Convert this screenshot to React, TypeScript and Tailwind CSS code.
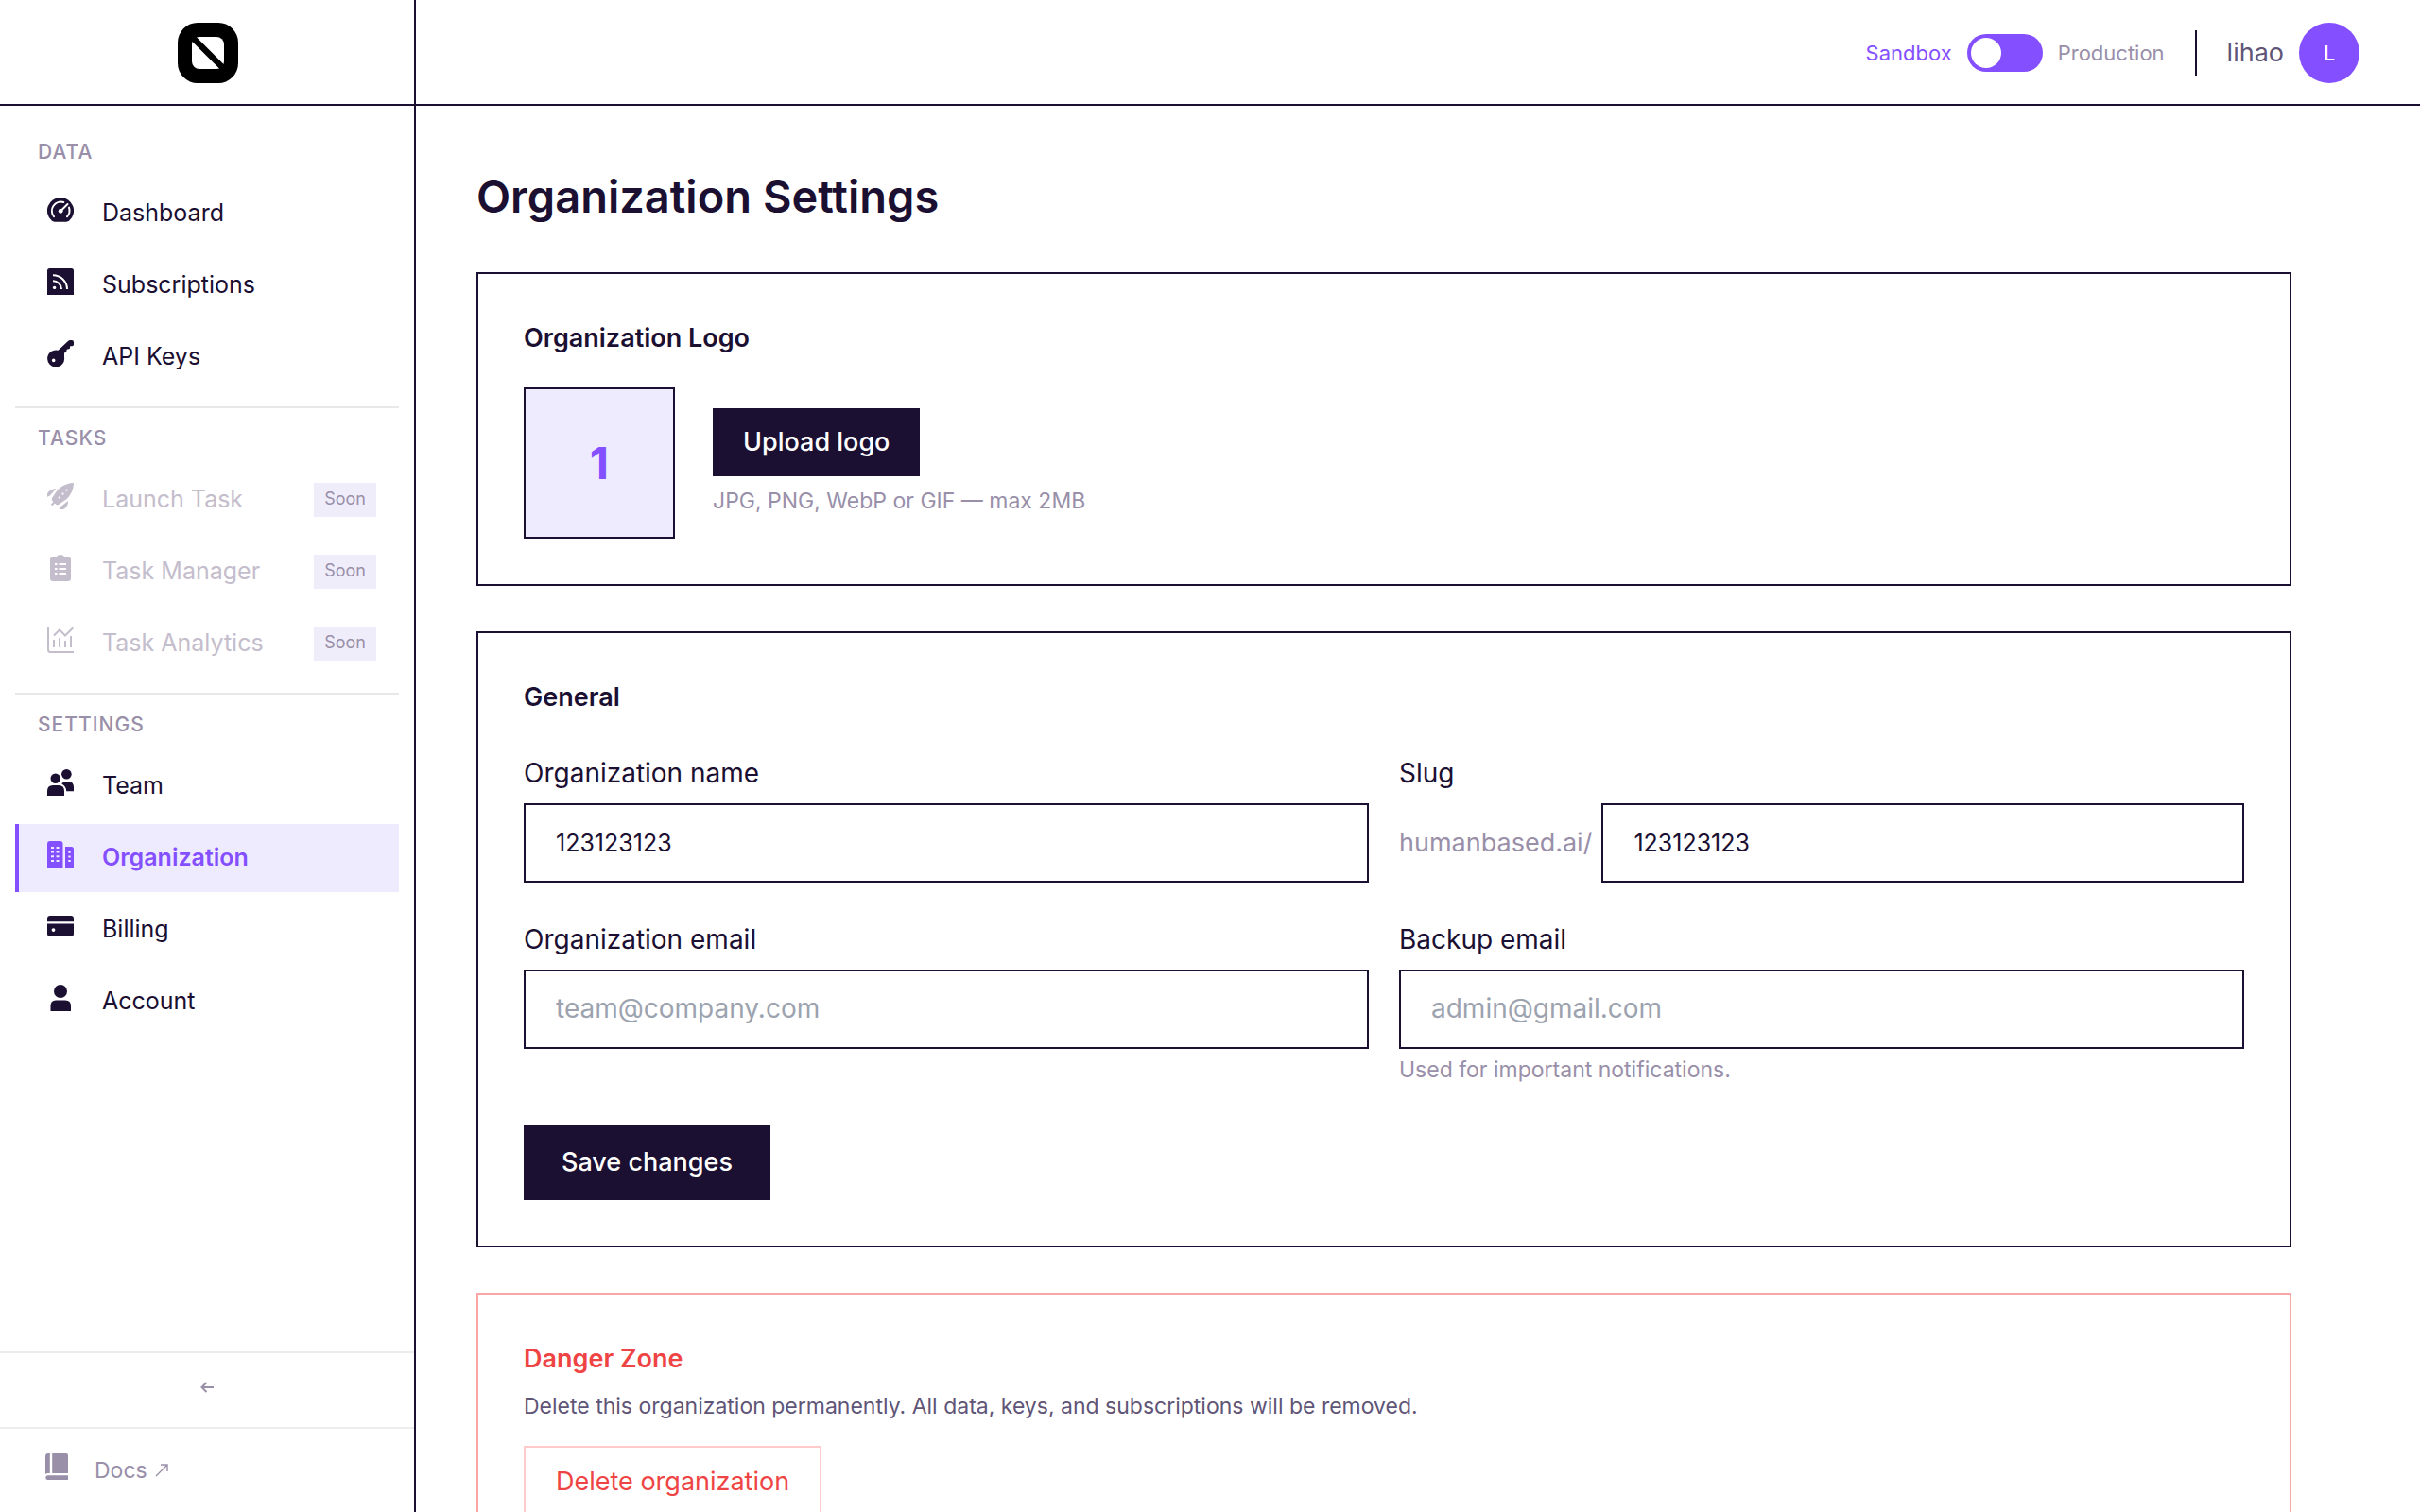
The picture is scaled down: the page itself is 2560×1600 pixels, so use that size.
import type { ReactNode } from 'react'
import { useState } from 'react'
import clsx from 'clsx'

type NavItem = {
  label: string
  icon: ReactNode
  active?: boolean
  soon?: boolean
}

const icons = {
  dashboard: (
    <>
      <path
        fill="currentColor"
        d="M14 1a14 14 0 0 0-9.2 24.6c.9.8 1.8 1.1 3 1.1h12.4c1.2 0 2.1-.3 3-1.1A14 14 0 0 0 14 1Z"
      />
      <g fill="none" stroke="#fff" strokeWidth="2" strokeLinecap="round">
        <path d="M7 21.2A9.6 9.6 0 0 1 17.3 6" />
        <path d="M23 11.6a9.6 9.6 0 0 1-2 9.6M15 14.5l6.5-6.5" />
      </g>
      <circle cx="14.2" cy="15.3" r="2.4" fill="#fff" />
    </>
  ),
  feed: (
    <>
      <path fill="currentColor" d="M2.5 0h23Q28 0 28 2.5V28H0V2.5Q0 0 2.5 0Z" />
      <g fill="none" stroke="#fff" strokeWidth="2">
        <path d="M6 7.2A15 15 0 0 1 21 22" />
        <path d="M6 13.2A9 9 0 0 1 15 22" />
      </g>
      <circle cx="7.6" cy="20.4" r="1.7" fill="#fff" />
    </>
  ),
  key: (
    <path
      fill="currentColor"
      fillRule="evenodd"
      d="M11.5 10.8 22 .9Q23 0 24.3 0H26q2 0 2 2v3.2l-1.5 1h-2.3l-.4 2.8-3.2.8-.4 2.8-2.2.8V18A9 9 0 1 1 11.5 10.8ZM6.7 19.6a1.8 1.8 0 1 0 0 3.6 1.8 1.8 0 0 0 0-3.6Z"
    />
  ),
  rocket: (
    <>
      <path
        fill="currentColor"
        fillRule="evenodd"
        d="M27.2 0C20 .5 14 4 10.5 8L5 16q-.8 1.5.3 2.7L6.5 20l-2.7 2.7 1.5 1.5L8 21.5l1.3 1.2q1.2 1 2.7.2L20 17.5C24.5 13.5 27.5 8 28 .8q0-.8-.8-.8ZM20.5 6.6a1.1 1.1 0 1 1 0 2.2 1.1 1.1 0 0 1 0-2.2Zm-4 4a1.1 1.1 0 1 1 0 2.2 1.1 1.1 0 0 1 0-2.2Zm-3.8 3.8a1.1 1.1 0 1 1 0 2.2 1.1 1.1 0 0 1 0-2.2Z"
      />
      <path
        fill="currentColor"
        d="M9.2 6.2C5 6 1.5 8.5 0 11.5v3.3l2.5-1ZM22 19c.3 4.5-2.5 8.5-5.5 9h-3l-1-1.5Z"
      />
    </>
  ),
  clipboard: (
    <path
      fill="currentColor"
      fillRule="evenodd"
      d="M5 2h5q1-2 4-2t4 2h5q2 0 2 2v21q0 3-3 3H6q-3 0-3-3V4q0-2 2-2ZM8 9v2h2.5V9Zm4.5 0v2H20V9ZM8 14v2h2.5v-2Zm4.5 0v2H20v-2ZM8 19v2h2.5v-2Zm4.5 0v2H20v-2Z"
    />
  ),
  chart: (
    <g fill="none" stroke="currentColor" strokeWidth="2">
      <path d="M1 0v24.5Q1 27 3.5 27H28" />
      <path d="M7 14v8M13 12v10M19 15v7M25 10v12" />
      <path d="M7 9.5 13 3.5l6 6L27.3 1.2" />
    </g>
  ),
  team: (
    <g fill="currentColor">
      <circle cx="8.7" cy="9.8" r="5.2" />
      <circle cx="20.4" cy="5.3" r="5.3" />
      <path d="M6 17h6q6 0 6 6v5H0v-5q0-6 6-6Z" />
      <path d="M15.2 15.2Q17.5 13 20 13h2q6 0 6 6v4.3h-7.8q0-5-5-8.1Z" />
    </g>
  ),
  building: (
    <path
      fill="currentColor"
      fillRule="evenodd"
      d="M3 0h10.5q3 0 3 3v25H0V3q0-3 3-3Zm1 6v2h3V6Zm5.5 0v2h3V6ZM4 10.5v2h3v-2Zm5.5 0v2h3v-2ZM4 15.2v2h3v-2Zm5.5 0v2h3v-2ZM4 20v2h3v-2Zm5.5 0v2h3v-2ZM19 6h6.5Q28 6 28 8.5V28h-9Zm3.3 4.8v2h2.4v-2Zm0 4.6v2h2.4v-2Zm0 4.6v2h2.4v-2Z"
    />
  ),
  card: (
    <path
      fill="currentColor"
      fillRule="evenodd"
      d="M3 3h22q3 0 3 3v3.3H0V6q0-3 3-3ZM0 11.5h28v11q0 2-2 2H2q-2 0-2-2Zm6.5 4.7a1.9 1.9 0 1 0 0 3.8 1.9 1.9 0 0 0 0-3.8Z"
    />
  ),
  user: (
    <g fill="currentColor">
      <circle cx="14" cy="7" r="7" />
      <path d="M9 16.5h10q6 0 6 6V28H3.5v-5.5q0-6 5.5-6Z" />
    </g>
  ),
  book: (
    <g fill="currentColor">
      <path d="M3 0h1.8v21H2.5Q1 21 0 22V3q0-3 3-3ZM7.2 0H22q2 0 2 2v19H7.2Z" />
      <path d="M2.5 23.3H24V28H2.5Q.3 28 .3 25.7t2.2-2.4Z" />
    </g>
  ),
}

const sections: { title: string; items: NavItem[] }[] = [
  {
    title: 'DATA',
    items: [
      { label: 'Dashboard', icon: icons.dashboard },
      { label: 'Subscriptions', icon: icons.feed },
      { label: 'API Keys', icon: icons.key },
    ],
  },
  {
    title: 'TASKS',
    items: [
      { label: 'Launch Task', icon: icons.rocket, soon: true },
      { label: 'Task Manager', icon: icons.clipboard, soon: true },
      { label: 'Task Analytics', icon: icons.chart, soon: true },
    ],
  },
  {
    title: 'SETTINGS',
    items: [
      { label: 'Team', icon: icons.team },
      { label: 'Organization', icon: icons.building, active: true },
      { label: 'Billing', icon: icons.card },
      { label: 'Account', icon: icons.user },
    ],
  },
]

function NavRow({ item }: { item: NavItem }) {
  const content = (
    <>
      <svg viewBox="0 0 28 28" className="mb-2 size-7 shrink-0" aria-hidden="true">
        {item.icon}
      </svg>
      <span className="flex-1">{item.label}</span>
    </>
  )
  const row = 'flex h-18 items-center gap-[30px] border-l-4 pl-[30px] pr-6 text-[25px]'

  if (item.soon) {
    return (
      <div className={clsx(row, 'border-transparent text-[#c4bdcc]')}>
        {content}
        <span className="bg-[#f0edfb] px-[11px] pb-0.5 text-lg leading-[34px] text-[#998fa9]">
          Soon
        </span>
      </div>
    )
  }
  return (
    <a
      href="#"
      aria-current={item.active ? 'page' : undefined}
      className={clsx(
        row,
        item.active
          ? 'border-[#844fff] bg-[#efebff] font-semibold text-[#844fff]'
          : 'border-transparent'
      )}
    >
      {content}
    </a>
  )
}

function Sidebar() {
  return (
    <aside className="flex w-110 shrink-0 flex-col border-r-2 border-[#1b0f32]">
      <div className="flex h-28 shrink-0 items-center justify-center border-b-2 border-[#1b0f32] pt-0.5 pl-0.5">
        <svg viewBox="0 0 64 64" className="size-16" role="img" aria-label="Home">
          <rect width="64" height="64" rx="21" fill="#000" />
          <rect x="15" y="15" width="34" height="34" rx="8" fill="#fff" />
          <path d="M15 15 49 49" stroke="#000" strokeWidth="6.5" strokeLinecap="square" />
        </svg>
      </div>

      <nav className="flex-1 px-4 pt-[33px]">
        {sections.map((section, i) => (
          <div
            key={section.title}
            className={clsx(i > 0 && 'mt-4 border-t-2 border-[#e8e8e8] pt-4')}
          >
            <h2 className="mb-[13px] px-6 text-[21px] leading-8 font-medium tracking-wider text-[#998fa9]">
              {section.title}
            </h2>
            <div className="flex flex-col gap-1">
              {section.items.map((item) => (
                <NavRow key={item.label} item={item} />
              ))}
            </div>
          </div>
        ))}
      </nav>

      <button
        type="button"
        aria-label="Collapse sidebar"
        className="flex h-20 items-center justify-center border-t-2 border-[#ededed] pb-1.5 text-[#998fa9]"
      >
        <svg viewBox="0 0 14 12" className="h-3 w-3.5" aria-hidden="true">
          <path
            d="M6.5 1 1.5 6l5 5M1.5 6H14"
            fill="none"
            stroke="currentColor"
            strokeWidth="2"
          />
        </svg>
      </button>
      <a
        href="#"
        className="flex h-[90px] items-center gap-7 border-t-2 border-[#ededed] px-12 text-[23px] text-[#998fa9]"
      >
        <svg viewBox="0 0 24 28" className="mb-2 h-7 w-6" aria-hidden="true">
          {icons.book}
        </svg>
        <span className="flex items-center gap-2">
          Docs
          <svg viewBox="0 0 14 14" className="size-3.5" aria-hidden="true">
            <path d="M1 13 13 1M6 1h7v7" fill="none" stroke="currentColor" strokeWidth="1.4" />
          </svg>
        </span>
      </a>
    </aside>
  )
}

function Header() {
  const [production, setProduction] = useState(false)

  return (
    <header className="flex h-28 shrink-0 items-center justify-end border-b-2 border-[#1b0f32] pt-0.5 pr-16">
      <label className="flex items-center gap-4 text-[22px]">
        <span className={production ? 'text-[#998fa9]' : 'text-[#844fff]'}>Sandbox</span>
        <input
          type="checkbox"
          role="switch"
          checked={production}
          onChange={(e) => setProduction(e.target.checked)}
          className="h-10 w-20 appearance-none rounded-full bg-[#844fff] p-1 before:block before:size-8 before:rounded-full before:bg-white checked:before:ml-10"
        />
        <span className={production ? 'text-[#844fff]' : 'text-[#998fa9]'}>
          Production
        </span>
      </label>
      <div className="mx-8 h-12 w-0.5 bg-[#1b0f32]" />
      <div className="flex items-center gap-4">
        <span className="text-[27px] text-[#5f5577]">lihao</span>
        <span className="flex size-16 items-center justify-center rounded-full bg-[#844fff] text-[22px] font-medium text-white">
          L
        </span>
      </div>
    </header>
  )
}

function Card({
  title,
  danger,
  children,
}: {
  title: string
  danger?: boolean
  children: ReactNode
}) {
  return (
    <section
      className={clsx('border-2 p-12', danger ? 'border-[#fca5a5]' : 'border-[#1b0f32]')}
    >
      <h2
        className={clsx('text-[27px] leading-10 font-semibold', danger && 'text-[#ef4444]')}
      >
        {title}
      </h2>
      {children}
    </section>
  )
}

function Field({
  id,
  label,
  prefix,
  help,
  value,
  placeholder,
}: {
  id: string
  label: string
  prefix?: string
  help?: string
  value?: string
  placeholder?: string
}) {
  return (
    <div>
      <label htmlFor={id} className="mb-3 block text-[28px] leading-10">
        {label}
      </label>
      <div className="flex items-center gap-2.5">
        {prefix && <span className="text-[27px] text-[#998fa9]">{prefix}</span>}
        <input
          id={id}
          type="text"
          defaultValue={value}
          placeholder={placeholder}
          className="h-21 min-w-0 flex-1 border-2 border-[#1b0f32] px-8 text-[25px] outline-none placeholder:text-[28px] placeholder:text-[#9ca3af]"
        />
      </div>
      {help && <p className="mt-1 text-[23px] leading-9 text-[#998fa9]">{help}</p>}
    </div>
  )
}

export default function App() {
  return (
    <div className="flex h-screen overflow-hidden bg-white font-['Inter',sans-serif] text-[#1b0f32]">
      <Sidebar />
      <div className="flex min-w-0 flex-1 flex-col">
        <Header />
        <main className="flex-1 overflow-y-auto px-16 py-16 [scrollbar-width:none]">
          <div className="flex max-w-[1920px] flex-col gap-12">
            <h1 className="text-[47px] leading-16 font-semibold">Organization Settings</h1>

            <Card title="Organization Logo">
              <div className="mt-8 flex items-center gap-10">
                <div className="flex size-40 items-center justify-center border-2 border-[#1b0f32] bg-[#efebff] text-[47px] font-bold text-[#844fff]">
                  1
                </div>
                <div>
                  <button
                    type="button"
                    className="h-18 bg-[#1b0f32] px-8 text-[27px] font-medium text-white"
                  >
                    Upload logo
                  </button>
                  <p className="mt-2 text-[23px] leading-9 text-[#998fa9]">
                    JPG, PNG, WebP or GIF — max 2MB
                  </p>
                </div>
              </div>
            </Card>

            <Card title="General">
              <form className="mt-10">
                <div className="grid grid-cols-2 gap-x-8 gap-y-10">
                  <Field id="org-name" label="Organization name" value="123123123" />
                  <Field
                    id="org-slug"
                    label="Slug"
                    prefix="humanbased.ai/"
                    value="123123123"
                  />
                  <Field
                    id="org-email"
                    label="Organization email"
                    placeholder="team@company.com"
                  />
                  <Field
                    id="backup-email"
                    label="Backup email"
                    placeholder="admin@gmail.com"
                    help="Used for important notifications."
                  />
                </div>
                <button
                  type="button"
                  className="mt-10 h-20 bg-[#1b0f32] px-10 text-[27px] font-medium text-white"
                >
                  Save changes
                </button>
              </form>
            </Card>

            <Card title="Danger Zone" danger>
              <p className="mt-3 text-[23px] leading-9 text-[#5f5577]">
                Delete this organization permanently. All data, keys, and subscriptions
                will be removed.
              </p>
              <button
                type="button"
                className="mt-6 h-19 border-2 border-[#fecaca] px-8 text-[27px] text-[#ef4444]"
              >
                Delete organization
              </button>
            </Card>
          </div>
        </main>
      </div>
    </div>
  )
}
